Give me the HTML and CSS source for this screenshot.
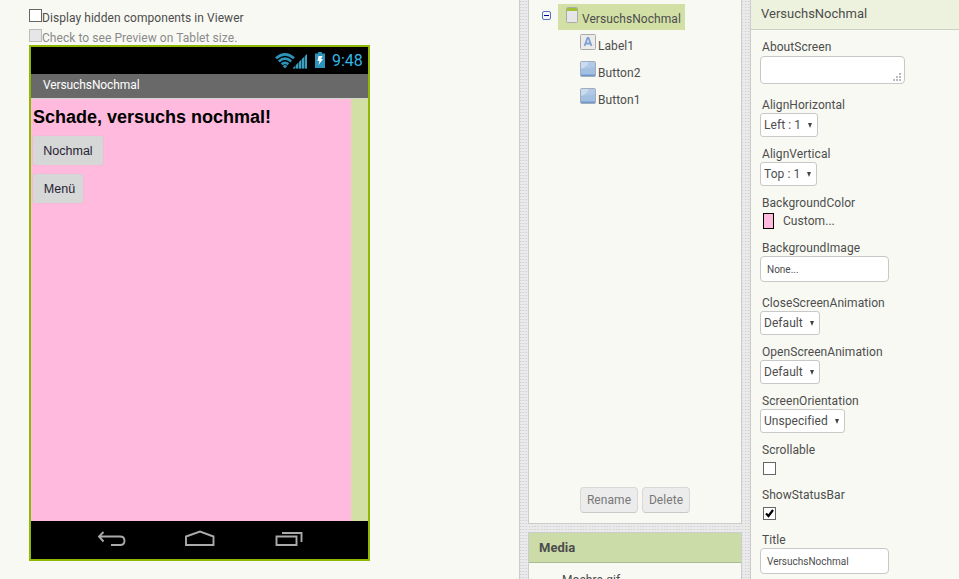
FILE: index.html
```html
<!DOCTYPE html>
<html lang="de">
<head>
<meta charset="utf-8">
<title>VersuchsNochmal</title>
<link rel="stylesheet" href="styles.css">
</head>
<body>
<div class="workspace">
  <main class="viewer">
    <div class="option"><span class="check"></span><span>Display hidden components in Viewer</span></div>
    <div class="option off"><span class="check"></span><span>Check to see Preview on Tablet size.</span></div>
    <div class="phone">
      <div class="status">
        <svg width="33" height="18" viewBox="0 0 33 18"><g fill="none" stroke="#2d93b8" stroke-width="2.700"><path d="M1 6.3Q10 -1.7 19 6.3M3.8 9.4Q10 3.9 16.2 9.4M6.6 12.3Q10 9.3 13.4 12.3"/></g><path d="M7.7 14q2.3-1.8 4.600 0L10 16.500z" fill="#2d93b8"/><path d="M17.500 16.500L32 2v14.500z" fill="#17495c"/><path d="M18 16.500h2v-2.500l-2 2zm3 0h2v-5.500l-2 2zm3 0h2V8l-2 2zm3 0h2V5l-2 2zm3 0h2V2l-2 2z" fill="#3d9dbd"/></svg>
        <svg class="battery" width="10" height="16" viewBox="0 0 10 16"><path d="M3 0h4v1.500h3V16H0V1.500h3z" fill="#2d93b8"/><path d="M3.500 4h4L6 7h2l-4.500 6L4.500 9H2.500z" fill="#fff"/></svg>
        <span class="clock">9:48</span>
      </div>
      <div class="titlebar">VersuchsNochmal</div>
      <div class="screen">
        <div class="canvas">
          <div class="message">Schade, versuchs nochmal!</div>
          <div class="app-button nochmal">Nochmal</div>
          <div class="app-button menu">Menü</div>
        </div>
      </div>
      <div class="nav">
        <svg width="340" height="38" viewBox="0 0 340 38" fill="none" stroke="#aaa" stroke-width="1.900"><path d="M72.500 11L68 15.500L72.500 20.500M69 15.500H89Q93.500 15.500 93.500 19.800T89 24H80"/><path d="M155 24V15.500L169 10.500L182.500 15.500V24z"/><path d="M245.500 15.500h20v8.500h-20zM251 12h19.500v9"/></svg>
      </div>
    </div>
  </main>
  <section class="middle">
    <div class="panel components">
      <div class="tree-root">
        <svg class="toggle" width="9" height="9" viewBox="0 0 9 9"><rect x=".5" y=".5" width="8" height="8" rx="1.500" fill="#f5f7ff" stroke="#5871b5"/><path d="M2 4.500h5" stroke="#00009c"/></svg>
        <div class="selected">
          <svg width="12" height="16" viewBox="0 0 12 16"><rect x=".5" y=".5" width="11" height="15" rx="1" fill="#e6e6e6" stroke="#aaa"/><path d="M1 1h10v3H1z" fill="#a3c134"/></svg><span>VersuchsNochmal</span>
        </div>
      </div>
      <div class="tree-item"><svg width="16" height="16" viewBox="0 0 16 16"><rect x=".5" y=".5" width="15" height="15" rx="1" fill="#ebebeb" stroke="#aaa"/><path d="M4.500 12L7.500 4h1l3 8M5.500 9.500h5" fill="none" stroke="#7f9fd0" stroke-width="1.800"/></svg><span>Label1</span></div>
      <div class="tree-item"><svg width="16" height="16" viewBox="0 0 16 16"><rect x=".5" y=".5" width="15" height="15" rx="1" fill="#a3bfe2" stroke="#a3adba"/><path d="M1 1h8Q8 6 1 8z" fill="#c9dbf0"/><path d="M9 1h6v5Q9 7 1 8Q8 6 9 1z" fill="#b1c9e7"/><path d="M1 13.500h14V15H1z" fill="#6f98cf"/></svg><span>Button2</span></div>
      <div class="tree-item"><svg width="16" height="16" viewBox="0 0 16 16"><rect x=".5" y=".5" width="15" height="15" rx="1" fill="#a3bfe2" stroke="#a3adba"/><path d="M1 1h8Q8 6 1 8z" fill="#c9dbf0"/><path d="M9 1h6v5Q9 7 1 8Q8 6 9 1z" fill="#b1c9e7"/><path d="M1 13.500h14V15H1z" fill="#6f98cf"/></svg><span>Button1</span></div>
      <div class="actions"><div class="action rename">Rename</div><div class="action delete">Delete</div></div>
    </div>
    <div class="panel media">
      <h2>Media</h2>
      <div class="file">Moehre.gif</div>
    </div>
  </section>
  <aside class="properties">
    <h1>VersuchsNochmal</h1>
    <div class="property about"><label>AboutScreen</label><div class="area"><svg width="8" height="8" viewBox="0 0 8 8" fill="#bbb"><path d="M6 0h2v2H6zM3 3h2v2H3zM6 3h2v2H6zM0 6h2v2H0zM3 6h2v2H3zM6 6h2v2H6z"/></svg></div></div>
    <div class="property select-row"><label>AlignHorizontal</label><div class="select w58">Left : 1<i></i></div></div>
    <div class="property select-row"><label>AlignVertical</label><div class="select w57">Top : 1<i></i></div></div>
    <div class="property short"><label>BackgroundColor</label><div class="color"><span class="swatch"></span><span>Custom...</span></div></div>
    <div class="property image-row"><label>BackgroundImage</label><div class="input">None...</div></div>
    <div class="property select-row"><label>CloseScreenAnimation</label><div class="select w60">Default<i></i></div></div>
    <div class="property select-row"><label>OpenScreenAnimation</label><div class="select w60">Default<i></i></div></div>
    <div class="property select-row"><label>ScreenOrientation</label><div class="select w85">Unspecified<i></i></div></div>
    <div class="property short"><label>Scrollable</label><div class="check boxed"></div></div>
    <div class="property short"><label>ShowStatusBar</label><div class="check boxed"><svg width="11" height="11" viewBox="0 0 11 11"><path d="M2 5.500L4.500 8L9 2" fill="none" stroke="#000" stroke-width="2.200"/></svg></div></div>
    <div class="property"><label>Title</label><div class="input">VersuchsNochmal</div></div>
  </aside>
</div>
</body>
</html>
```
FILE: styles.css
```css
* { box-sizing: border-box; }
body { margin: 0; height: 579px; overflow: hidden; font: 12px/17px Roboto, sans-serif; letter-spacing: 0.06px; color: #4d4d4d; }
svg { display: block; flex: none; }
.workspace {
  display: grid; grid-template-columns: 520px 214px 209px; column-gap: 8px; height: 579px;
  background-color: #eaeaea;
  background-image: radial-gradient(#d2d2d5 0.6px, transparent 0.8px), radial-gradient(#dededf 0.6px, transparent 0.8px);
  background-size: 3px 3px, 4px 3px;
}
.viewer { background: #f8f9f3; border-right: 1px solid #ccc; padding: 7px 0 0 29px; height: 579px; }
.option { display: flex; height: 20px; line-height: 23px; white-space: nowrap; }
.option + .option { height: 18px; }
.check { flex: none; width: 13px; height: 13px; background: #fff; border: 1px solid #666; }
.option .check { margin-top: 2px; }
.off { color: #8b8b8b; }
.off .check { background: #e6e6e6; border-color: #bcbcbc; }
.phone { width: 341px; height: 516px; border: 2px solid #8fb900; background: #000; }
.status { height: 27px; display: flex; align-items: center; padding-left: 244px; }
.battery { margin-left: 7px; margin-top: -1px; }
.clock { font-size: 16px; letter-spacing: 0; color: #33b5e5; margin-left: 7px; margin-top: -1px; }
.titlebar { height: 24px; background: #696969; color: #fff; padding-left: 12px; line-height: 23px; letter-spacing: -0.1px; }
.screen { height: 423px; background: #d2e0a6; border-top: 1px solid #d2d6cc; }
.canvas { width: 320px; height: 422px; background: #ffbadd; padding: 5px 2px; font-family: "Liberation Sans", Arial, sans-serif; letter-spacing: 0; }
.message { font-size: 18px; line-height: 26px; font-weight: bold; color: #000; white-space: nowrap; }
.app-button { height: 29px; line-height: 30px; background: #d6d7d7; border-radius: 2px; color: #262333; text-align: center; box-shadow: 0 0 1px #bbb; font-size: 12.500px; }
.nochmal { width: 70px; margin-top: 6px; }
.menu { width: 50px; margin-top: 9px; padding-left: 3px; }
.nav { height: 38px; overflow: hidden; }
.panel { width: 214px; background: #f8f9f3; border: 1px solid #ccc; }
.components { height: 524px; border-top: 0; padding-top: 4px; display: flex; flex-direction: column; }
.tree-root { display: flex; height: 26px; padding-left: 13px; }
.toggle { margin-top: 7px; }
.selected { display: flex; width: 127px; height: 26px; margin-left: 7px; background: #d2e0a6; padding: 3px 0 0 8px; }
.selected span { margin: 4px 0 0 4px; }
.tree-item { display: flex; height: 27px; padding: 4px 0 0 51px; }
.tree-item span { margin: 4px 0 0 2px; }
.actions { display: flex; gap: 4px; margin: auto 0 10px 51px; }
.action { height: 26px; line-height: 25px; text-align: center; color: #777; background: #ececec; border: 1px solid #d8d8d8; border-bottom-color: #c8c8c8; border-radius: 4px; }
.rename { width: 58px; }
.delete { width: 48px; }
.media { height: 60px; margin-top: 8px; }
.media h2 { margin: 0; height: 30px; padding-left: 10px; font-size: 13px; letter-spacing: 0; line-height: 30px; background: #ccdca8; border-bottom: 1px solid #aaba91; }
.file { padding: 9px 0 0 33px; }
.properties { background: #f8f9f3; border-left: 1px solid #ccc; }
.properties h1 { margin: 0 0 8px; height: 30px; line-height: 28px; padding-left: 10px; background: #edf2de; border-bottom: 1px solid #ccd0c4; font-size: 13px; letter-spacing: 0; font-weight: 400; }
.property { padding-left: 9px; height: 48px; }
.property label { display: block; height: 17px; line-height: 19px; padding-left: 2px; }
.about { height: 58px; }
.select-row { height: 49px; }
.short { height: 45px; }
.image-row { height: 55px; }
.area, .select, .input { background: #fff; border: 1px solid #c8c8c8; border-radius: 4px; }
.area { width: 145px; height: 28px; margin-top: 1px; display: flex; justify-content: flex-end; align-items: flex-end; padding: 0 3px 2px 0; }
.select { height: 24px; padding: 1px 5px 0 3px; display: flex; align-items: center; justify-content: space-between; border-radius: 3px; }
.select i { border: 2.500px solid transparent; border-top: 5px solid #444; border-bottom: 0; }
.w57 { width: 57px; }
.w58 { width: 58px; }
.w60 { width: 60px; }
.w85 { width: 85px; }
.input { width: 129px; height: 26px; line-height: 25px; padding-left: 6px; font-size: 10px; letter-spacing: 0; }
.color { display: flex; padding: 0 0 0 3px; line-height: 20px; }
.swatch { width: 11px; height: 16px; margin: 2px 9px 0 0; background: #ffbadd; border: 1px solid #000; }
.boxed { margin: 4px 0 0 3px; }
```
